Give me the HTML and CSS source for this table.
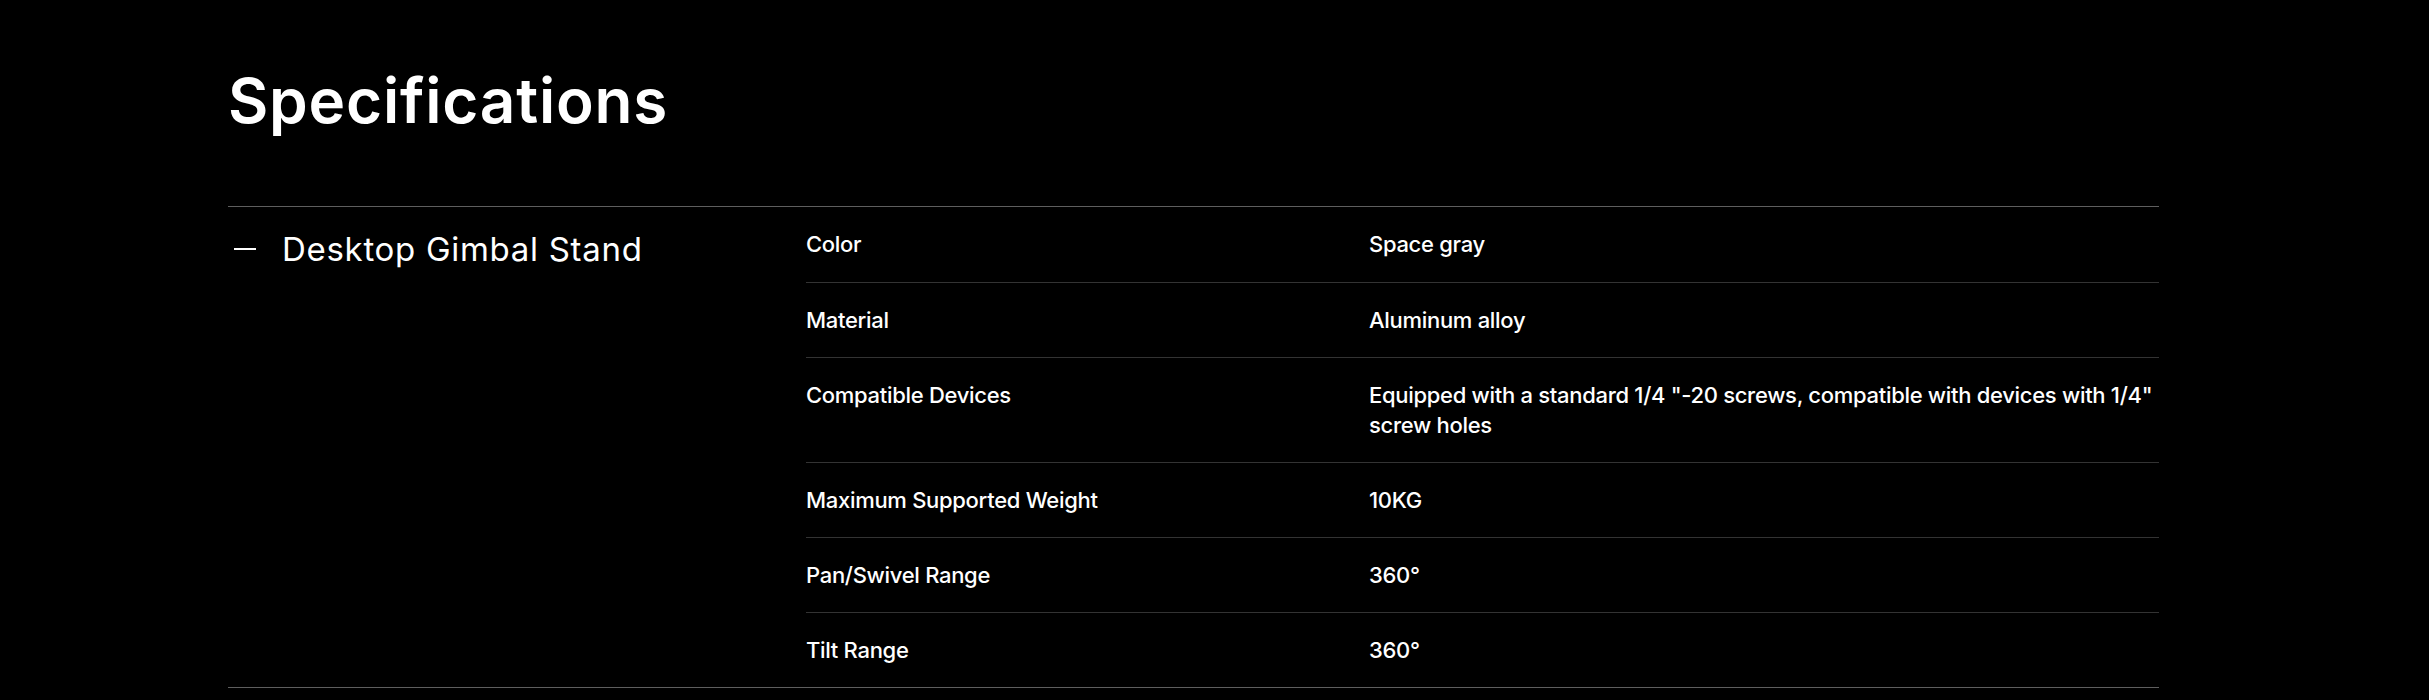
FILE: index.html
```html
<!DOCTYPE html>
<html lang="en">
<head>
<meta charset="utf-8">
<title>Specifications</title>
<link rel="stylesheet" href="styles.css">
</head>
<body>
<main class="specs">
  <h1 class="specs-title">Specifications</h1>
  <section class="spec-group">
    <div class="group-head">
      <span class="group-dash" aria-hidden="true"></span>
      <h2 class="group-name">Desktop Gimbal Stand</h2>
    </div>
    <div class="spec-table">
      <div class="spec-row"><div class="spec-label">Color</div><div class="spec-value">Space gray</div></div>
      <div class="spec-row"><div class="spec-label">Material</div><div class="spec-value">Aluminum alloy</div></div>
      <div class="spec-row"><div class="spec-label">Compatible Devices</div><div class="spec-value">Equipped with a standard 1/4 "-20 screws, compatible with devices with 1/4" screw holes</div></div>
      <div class="spec-row"><div class="spec-label">Maximum Supported Weight</div><div class="spec-value">10KG</div></div>
      <div class="spec-row"><div class="spec-label">Pan/Swivel Range</div><div class="spec-value">360°</div></div>
      <div class="spec-row"><div class="spec-label">Tilt Range</div><div class="spec-value">360°</div></div>
    </div>
  </section>
</main>
</body>
</html>
```

FILE: styles.css
```css
* { box-sizing: border-box; }
html, body {
  margin: 0;
  padding: 0;
  background: #000;
  color: #fff;
  font-family: Inter, "Noto Sans", "Liberation Sans", sans-serif;
}
.specs {
  width: 1931px;
  margin-left: 228px;
  padding-top: 65px;
}
.specs-title {
  margin: 0 0 69px;
  font-size: 62px;
  line-height: 72px;
  font-weight: 600;
  letter-spacing: 0.8px;
}
.spec-group {
  display: grid;
  grid-template-columns: 578px 1fr;
  border-top: 1px solid #5e5e5e;
  border-bottom: 1px solid #5e5e5e;
}
.group-head {
  display: flex;
  align-items: center;
  height: 40px;
  margin-top: 22px;
}
.group-dash {
  display: block;
  width: 22px;
  height: 2px;
  background: #fff;
  margin-left: 6px;
  margin-right: 26px;
}
.group-name {
  margin: 0;
  font-size: 33px;
  line-height: 40px;
  font-weight: 400;
  letter-spacing: 0.7px;
}
.spec-row {
  display: grid;
  grid-template-columns: 563px 1fr;
  padding: 22px 0 22px;
  font-size: 22px;
  line-height: 30px;
  font-weight: 500;
  letter-spacing: -0.3px;
}
.spec-row:first-child {
  padding-bottom: 23px;
}
.spec-row + .spec-row {
  border-top: 1px solid #333;
}
```
